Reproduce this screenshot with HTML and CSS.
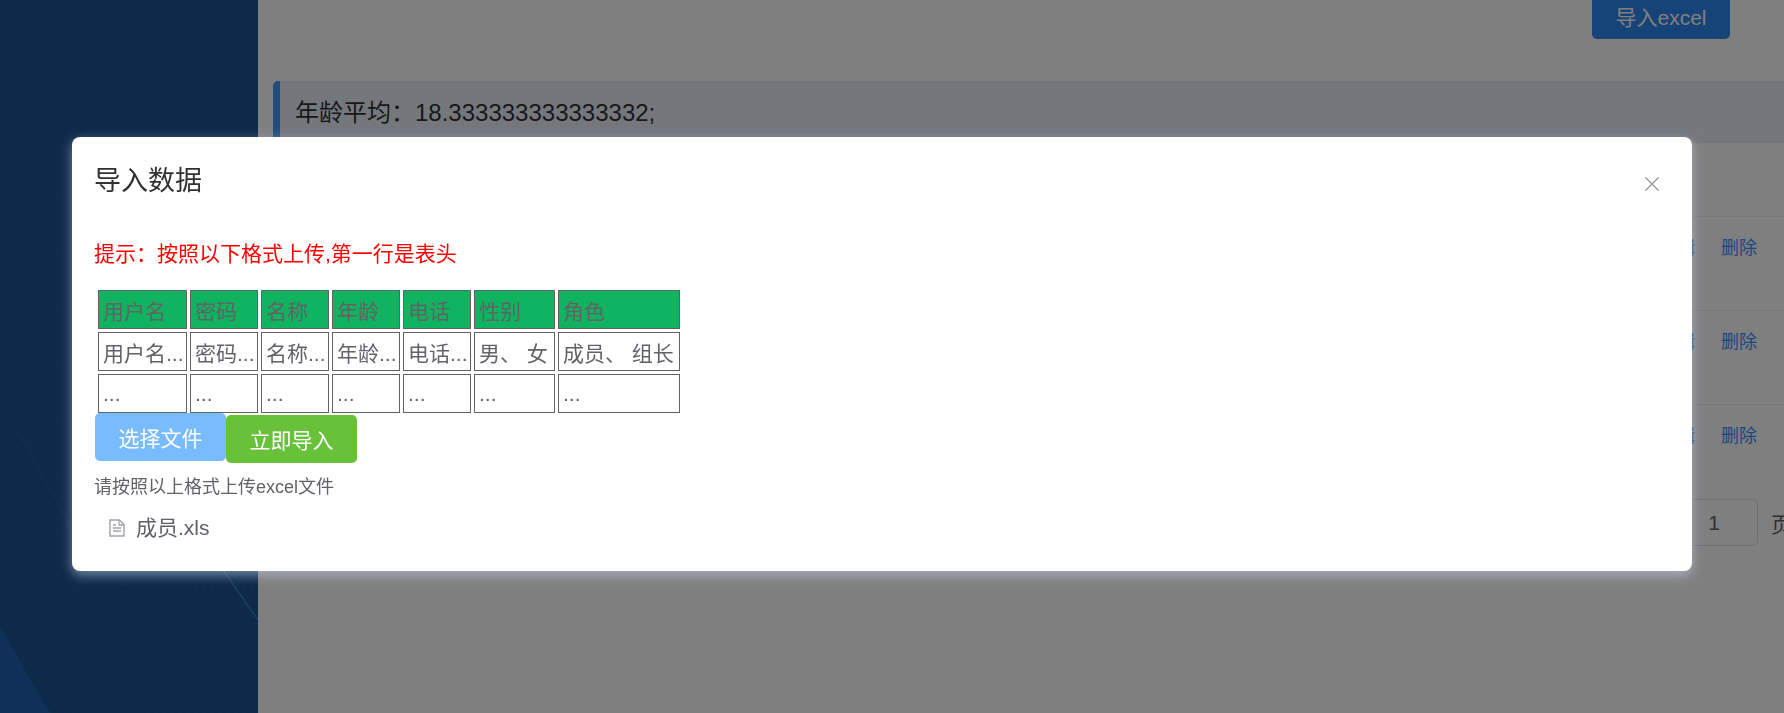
FILE: index.html
```html
<!DOCTYPE html>
<html>
<head>
	<meta charset="utf-8">
	<title>成员管理</title>
	<link rel="stylesheet" href="styles.css">
</head>
<body>
	<div class="app">
		<aside class="sidebar">
			<svg class="sidebar-art" width="258" height="713" viewBox="0 0 258 713">
				<polygon points="0,627 50,713 0,713" fill="#1e62b2"/>
				<line x1="223" y1="570" x2="258" y2="620" stroke="#3a7cc8" stroke-width="1.5"/>
				<line x1="17" y1="427" x2="72" y2="532" stroke="#245a9c" stroke-width="1.2"/>
			</svg>
		</aside>
		<main class="content">
			<div class="toolbar">
				<button class="import-btn">导入excel</button>
			</div>
			<div class="stat">年龄平均：18.333333333333332;</div>
			<div class="rows">
				<div class="row row-head"></div>
				<div class="row"><a>编辑</a><a>删除</a></div>
				<div class="row"><a>编辑</a><a>删除</a></div>
				<div class="row"><a>编辑</a><a>删除</a></div>
			</div>
			<div class="pager">
				<span class="pager-input">1</span>
				<span class="pager-text">页</span>
			</div>
		</main>
	</div>

	<div class="overlay">
		<section class="dialog">
			<header class="dialog-head">
				<h2>导入数据</h2>
				<svg class="dialog-close" width="14" height="14" viewBox="0 0 14 14">
					<path d="M0.5 0.5L13.5 13.5M13.5 0.5L0.5 13.5" stroke="#909399" stroke-width="1.2" fill="none"/>
				</svg>
			</header>
			<div class="dialog-body">
				<p class="hint">提示：按照以下格式上传,第一行是表头</p>
				<table class="format">
					<colgroup>
						<col class="c-user">
						<col class="c-mid">
						<col class="c-mid">
						<col class="c-mid">
						<col class="c-mid">
						<col class="c-sex">
						<col class="c-role">
					</colgroup>
					<tr class="format-head">
						<td>用户名</td>
						<td>密码</td>
						<td>名称</td>
						<td>年龄</td>
						<td>电话</td>
						<td>性别</td>
						<td>角色</td>
					</tr>
					<tr>
						<td>用户名...</td>
						<td>密码...</td>
						<td>名称...</td>
						<td>年龄...</td>
						<td>电话...</td>
						<td>男、&nbsp;女</td>
						<td>成员、&nbsp;组长</td>
					</tr>
					<tr>
						<td>...</td>
						<td>...</td>
						<td>...</td>
						<td>...</td>
						<td>...</td>
						<td>...</td>
						<td>...</td>
					</tr>
				</table>
				<div class="actions">
					<button class="btn btn-pick">选择文件</button>
					<button class="btn btn-go">立即导入</button>
				</div>
				<p class="tip">请按照以上格式上传excel文件</p>
				<div class="file">
					<svg class="file-icon" width="16" height="18" viewBox="0 0 16 18">
						<path d="M1 1H10.5L15 5.5V17H1Z" fill="none" stroke="#a0a3aa" stroke-width="1.4"/>
						<path d="M10 1V6H15M4 9H12M4 12H12M4 6H7" fill="none" stroke="#a0a3aa" stroke-width="1.3"/>
					</svg>
					<span>成员.xls</span>
				</div>
			</div>
		</section>
	</div>
</body>
</html>
```

FILE: styles.css
```css
html, body {
	margin: 0;
	height: 100%;
	overflow: hidden;
}
body {
	font-family: "Liberation Sans", "Noto Sans CJK SC", sans-serif;
	color: #303133;
	background: #fff;
}
p, h2 {
	margin: 0;
	font-weight: normal;
}
button {
	font-family: inherit;
	border: none;
	color: #fff;
}

.app {
	display: flex;
	height: 713px;
}
.sidebar {
	width: 258px;
	flex: none;
	position: relative;
	background-color: #1c5494;
	background-image:
		repeating-linear-gradient(60deg, rgba(255,255,255,0.012) 0 2px, transparent 2px 7px),
		repeating-linear-gradient(120deg, rgba(255,255,255,0.012) 0 2px, transparent 2px 7px);
}
.sidebar-art {
	position: absolute;
	left: 0;
	top: 0;
}
.content {
	flex: 1;
	min-width: 0;
	padding-left: 15px;
}
.toolbar {
	display: flex;
	justify-content: flex-end;
	height: 81px;
	padding-right: 54px;
}
.import-btn {
	width: 138px;
	height: 39px;
	padding: 0 0 7px;
	border-radius: 0 0 5px 5px;
	background: #2d87f0;
	font-size: 21px;
}
.stat {
	height: 62px;
	box-sizing: border-box;
	border-left: 7px solid #409eff;
	border-radius: 5px 0 0 5px;
	padding: 17px 15px;
	background: #e8f1fb;
	font-size: 24px;
	line-height: 30px;
	color: #303133;
}
.rows {
	margin-top: 14px;
}
.row {
	height: 94px;
	box-sizing: border-box;
	padding: 19px 27px 0 0;
	border-top: 1px solid #ebeef5;
	display: flex;
	justify-content: flex-end;
	gap: 26px;
	font-size: 18px;
	line-height: 24px;
	color: #3a8eff;
}
.row-head {
	height: 59px;
	border-top: none;
}
.pager {
	display: flex;
	justify-content: flex-end;
	align-items: center;
	gap: 13px;
	height: 47px;
	margin-top: 1px;
	margin-right: -8px;
	font-size: 21px;
	color: #606266;
}
.pager-input {
	width: 88px;
	height: 47px;
	box-sizing: border-box;
	border: 1px solid #dcdfe6;
	border-radius: 5px;
	text-align: center;
	line-height: 45px;
}

.overlay {
	position: fixed;
	left: 0;
	top: 0;
	right: 0;
	bottom: 0;
	background: rgba(0, 0, 0, 0.5);
}
.dialog {
	position: absolute;
	left: 72px;
	top: 137px;
	width: 1620px;
	height: 434px;
	box-sizing: border-box;
	border-radius: 8px;
	background: #fff;
	box-shadow: 0 4px 12px rgba(205, 215, 240, 0.55);
}
.dialog-head {
	position: relative;
	padding: 25px 23px 0;
}
.dialog-head h2 {
	margin-left: -1px;
	font-size: 27px;
	line-height: 38px;
	color: #303133;
}
.dialog-close {
	position: absolute;
	right: 33px;
	top: 40px;
}
.dialog-body {
	padding: 39px 23px 0;
}
.hint {
	margin-left: -1px;
	font-size: 21px;
	line-height: 30px;
	color: #ff0000;
}
.format {
	table-layout: fixed;
	width: 588px;
	border-collapse: separate;
	border-spacing: 3px;
	margin-top: 18px;
	font-size: 21px;
	color: #606266;
}
.format td {
	height: 39px;
	box-sizing: border-box;
	border: 1px solid #606266;
	padding: 0 0 0 4px;
	white-space: nowrap;
}
.format-head td {
	background: #10b360;
}
.c-user { width: 89px; }
.c-mid { width: 68px; }
.c-sex { width: 81px; }
.c-role { width: 122px; }
.actions {
	display: flex;
	align-items: flex-start;
	margin-top: -3px;
}
.btn {
	width: 131px;
	height: 48px;
	border-radius: 5px;
	font-size: 21px;
}
.btn-pick {
	background: #79bbff;
}
.btn-go {
	margin-top: 2px;
	background: #67c23a;
}
.tip {
	margin-top: 11px;
	margin-left: -1px;
	font-size: 18px;
	line-height: 26px;
	color: #606266;
}
.file {
	display: flex;
	align-items: center;
	gap: 11px;
	margin-top: 13px;
	padding-left: 14px;
	font-size: 21px;
	line-height: 30px;
	color: #606266;
}
```
